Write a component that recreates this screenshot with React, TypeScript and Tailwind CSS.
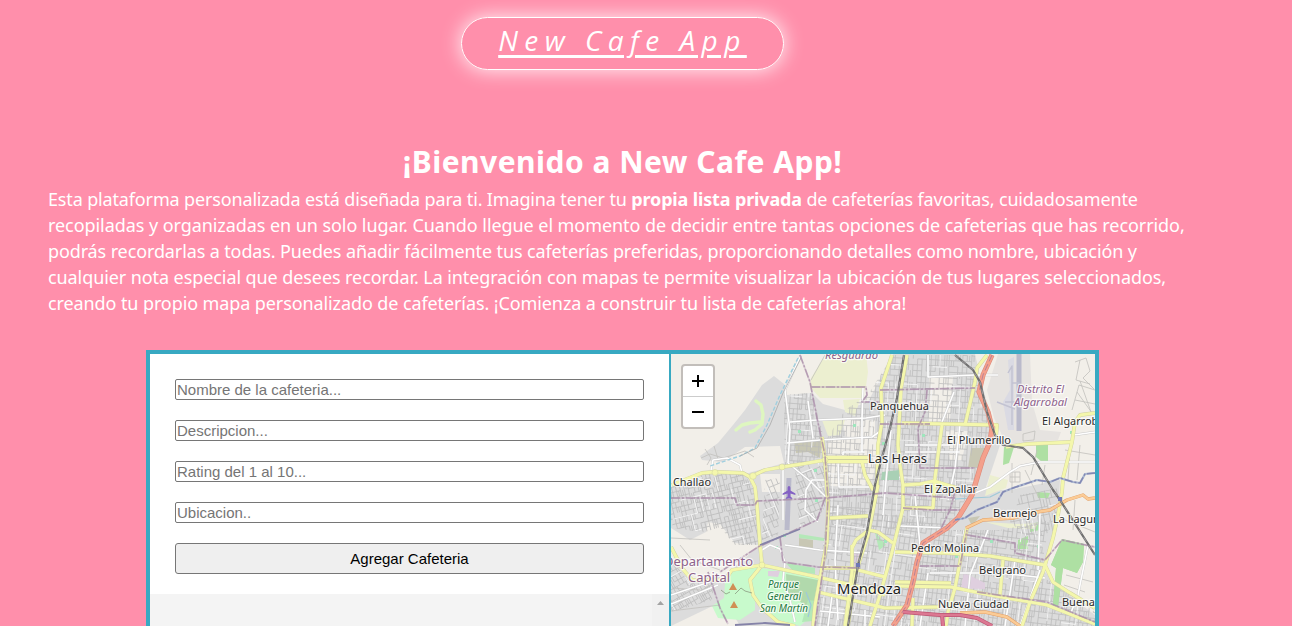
import React from "react";

type Zone = { id: string; shape: string; cx: number; cy: number; angle: number; step: number; size: number; seed: number };

function makeRandom(seed: number) {
  let s = seed;
  return () => {
    s = (s * 16807) % 2147483647;
    return s / 2147483647;
  };
}

function streetGrid(size: number, step: number, seed: number, density: number) {
  const rnd = makeRandom(seed);
  const n = Math.floor(size / step);
  let d = "";
  for (let i = -n; i <= n; i++) {
    for (let j = -n; j <= n; j++) {
      const x = i * step;
      const y = j * step * 1.3;
      if (rnd() < density) d += `M${x} ${y}h${step}`;
      if (rnd() < density) d += `M${x} ${y}v${step * 1.3}`;
      if (rnd() < density * 0.25) d += `M${x + step / 2} ${y}v${step * 1.3}`;
    }
  }
  return d;
}

const zones: Zone[] = [
  { id: "west", shape: "M671 487L705 474L743 474L756 490L760 545L735 545L720 527L705 532L671 528Z", cx: 710, cy: 510, angle: -14, step: 4, size: 80, seed: 11 },
  { id: "northwest", shape: "M784 395L812 393L822 430L825 460L785 465Z", cx: 800, cy: 430, angle: 4, step: 4, size: 60, seed: 31 },
  { id: "challao", shape: "M795 466L825 460L828 500L818 520L800 528L797 500ZM765 480L780 478L778 535L762 540Z", cx: 790, cy: 500, angle: -22, step: 5, size: 70, seed: 41 },
  { id: "north", shape: "M826 440L845 410L868 395L893 355L975 355L980 400L992 430L980 465L972 490L945 530L827 525Z", cx: 900, cy: 440, angle: 3, step: 4.5, size: 120, seed: 51 },
  { id: "center", shape: "M828 505L945 525L920 550L905 626L815 626L820 570Z", cx: 860, cy: 570, angle: 8, step: 5, size: 90, seed: 61 },
  { id: "southeast", shape: "M945 530L1000 530L1050 520L1040 575L1095 612V626H900L918 555Z", cx: 980, cy: 575, angle: 7, step: 4.5, size: 120, seed: 71 },
  { id: "bermejo", shape: "M1020 495L1060 488L1055 530L1030 540L1010 522Z", cx: 1030, cy: 510, angle: -12, step: 6, size: 50, seed: 81 },
  { id: "capital", shape: "M671 560L690 582L715 580L712 600L671 612Z", cx: 690, cy: 585, angle: -30, step: 4, size: 40, seed: 91 },
];

const yellowRoads = [
  "M672 485L702 473L715 472L743 473L750 477L765 470L782 467L802 464L825 460",
  "M825 457.5H868M825 461.5H868",
  "M750 477L755 487L757 505L760 545L762 565L750 580L753 595L762 608L778 622L795 626",
  "M671 547L682 568L692 580L725 580L732 570L762 565L818 577L865 588L885 595",
  "M822 437L825 460L827 490L828 505L827 542L822 568L815 605L813 626",
  "M892 355L881 388L882 422L878 445L877 485",
  "M862 462L865 475L873 490",
  "M907 355L901 388L898 445L900 465L903 485L903 508L897 532L892 552L880 595L870 626",
  "M987 355L977 368L975 382L965 425",
  "M902 423L997 425L996 437",
  "M942 425L935 478L933 508L903 508",
  "M903 485L920 484L934 481L957 488",
  "M1006 447L1027 444L1072 442",
  "M1095 413L1080 415L1075 422L1072 442L1063 478L1062 492L1058 515L1053 538L1043 572L1030 602L1022 626",
  "M895 552L947 553L990 556L1045 565L1053 582L1070 593L1095 608",
  "M1003 560L1000 595",
  "M895 582L951 583M895 586L951 587L990 595L1047 605L1095 624",
  "M967 528L960 562L955 588L948 612L946 626",
  "M830 518L868 516",
  "M818 592L885 608L940 607",
  "M878 485L868 535L855 575L848 626",
  "M852 545V572L845 626",
  "M820 568H850L885 577",
  "M913 598L912 626",
  "M852 548L856 540L869 530L878 532L893 543",
];

const whiteRoads = [
  "M801 355L785 390L790 430L788 463",
  "M790 422L817 420L866 418L885 415",
  "M808 401L813 438",
  "M787 443L820 440L872 437L879 432",
  "M863 388L862 418V452",
  "M843 455V452H865",
  "M928 355V377L975 375H998",
  "M954 392L942 422",
  "M960 425L955 468L948 500",
  "M711 470L713 460L727 458L740 465L742 473",
  "M788 463L810 481L827 498",
  "M812 480H826M812 480L806 490L805 510L818 522",
  "M783 470L783 520",
  "M762 560L762 550L770 545L780 549L785 562L783 580L790 600L795 622",
  "M785 545L820 550L867 553",
  "M838 462L839 487H878",
  "M838 505L835 560L838 620",
  "M891 430L887 470L883 515",
  "M915 495L920 545L917 570",
  "M905 445H950M905 452H960M900 495L935 495M900 526L950 528",
  "M975 493L990 487L1010 472L1020 466L1040 462H1095",
  "M1040 513L1038 570M1074 435L1095 432",
  "M930 573H1000L1045 578M928 573L920 626",
  "M988 530L970 575L965 626M1015 560L1005 626M1040 570L1020 626",
  "M1088 545L1078 595L1070 615",
  "M671 595L730 575M671 604L718 585M865 610L865 626M832 596L828 626M820 611L880 617",
];

const boundaries = [
  "M800 355L810 382L817 418L825 455L828 500L825 555L815 626",
  "M811 387H866L867 395L862 402H880",
  "M880 390L975 388",
  "M927 390L925 412L918 428L920 468H975",
  "M880 424H930",
  "M671 498H735L737 505H755L757 501L825 498L885 493L955 498",
  "M825 498L817 520L780 537L758 547L720 572",
  "M708 572L720 608L728 624",
  "M780 537L783 562L818 567L860 568",
  "M967 535L1015 543V553L1045 560L1062 540L1095 547",
  "M920 566H960L967 530",
  "M977 592L1047 602L1095 622",
  "M903 508L932 510H960M955 492L950 510L938 535",
];

const labels = [
  { t: "Resguardo", x: 825, y: 359, w: 53, s: 10.7, c: "#8d618b", i: true },
  { t: "Panquehua", x: 870, y: 410, w: 59, s: 10.7, c: "#2b2b2b" },
  { t: "Distrito El", x: 1017, y: 393, w: 47, s: 10.7, c: "#8d618b", i: true },
  { t: "Algarrobal", x: 1014, y: 406, w: 53, s: 10.7, c: "#8d618b", i: true },
  { t: "El Algarrobal", x: 1042, y: 425, w: 65, s: 10.7, c: "#2b2b2b" },
  { t: "El Plumerillo", x: 947, y: 444, w: 64, s: 10.7, c: "#2b2b2b" },
  { t: "Las Heras", x: 868, y: 463, w: 59, s: 12.6, c: "#2b2b2b" },
  { t: "Challao", x: 673, y: 486, w: 38, s: 10.7, c: "#2b2b2b" },
  { t: "El Zapallar", x: 924, y: 493, w: 53, s: 10.7, c: "#2b2b2b" },
  { t: "Bermejo", x: 993, y: 517, w: 44, s: 10.7, c: "#2b2b2b" },
  { t: "La Laguna", x: 1053, y: 523, w: 53, s: 10.7, c: "#2b2b2b" },
  { t: "Pedro Molina", x: 911, y: 552, w: 68, s: 10.7, c: "#2b2b2b" },
  { t: "Belgrano", x: 979, y: 574, w: 47, s: 10.7, c: "#2b2b2b" },
  { t: "Mendoza", x: 837, y: 594, w: 64, s: 14.8, c: "#1c1c1c" },
  { t: "Nueva Ciudad", x: 938, y: 608, w: 71, s: 10.7, c: "#2b2b2b" },
  { t: "Buena", x: 1062, y: 606, w: 33, s: 10.7, c: "#2b2b2b" },
  { t: "Departamento", x: 664, y: 566, w: 89, s: 12.8, c: "#8d618b" },
  { t: "Capital", x: 688, y: 582, w: 42, s: 12.8, c: "#8d618b" },
  { t: "Parque", x: 768, y: 588, w: 31, s: 10.2, c: "#1f7a3f", i: true },
  { t: "General", x: 767, y: 600, w: 34, s: 10.2, c: "#1f7a3f", i: true },
  { t: "San Martín", x: 760, y: 612, w: 48, s: 10.2, c: "#1f7a3f", i: true },
];

const greens = [
  [798, 430], [853, 424], [814, 469], [922, 434], [882, 442], [965, 545], [1070, 431], [913, 568],
  [955, 555], [815, 499], [775, 546], [846, 600], [1037, 545], [990, 540], [884, 540], [783, 534],
];

function CityMap() {
  const trunk = "M992 355L983 375L979 392L988 412L992 428L990 442L983 458L975 485L972 495L958 518L947 528L923 543L917 562L913 582L907 605L893 626";
  const rails = "M904 355L897 398L890 428L880 465L875 485L867 532L858 565L848 626M955 355L973 370L980 382L987 412L995 435L1003 445L1023 448L1033 457L1053 490L1060 500L1095 555";
  const river = "M1095 473L1085 474L1080 483L1073 482L1060 478L1050 482L1037 480L1013 488L1003 492L997 502L977 510L965 518L955 520";
  return (
    <svg className="block h-[272px] w-[424px]" viewBox="671 354 424 272" fill="none" strokeLinejoin="round">
      <defs>
        {zones.map((z) => (
          <clipPath key={z.id} id={z.id}>
            <path d={z.shape} />
          </clipPath>
        ))}
      </defs>
      <path fill="#f2efe9" d="M671 354H1095V626H671Z" />
      <path fill="#dcdcdc" d="M774 376L784 384L787 395L812 393L823 404L845 410L868 402L893 354H975L982 385L992 420L1000 445L985 490L1010 490L1060 480L1058 515L1050 545L1045 572L1075 600L1095 615V626H740L725 600L671 626V560L690 580L725 575L760 545L735 543L720 524L708 522L706 532L690 540L671 528V487L702 473L745 474L784 463L780 446L745 447L723 462L702 460L700 456L718 443L733 425L745 410L762 385Z" />
      <path fill="#f2efe9" d="M827 440L845 437L877 437V460L870 488L830 486ZM929 378L953 377L950 420L929 422ZM843 420H875V437H845ZM945 430L968 431L962 460H950ZM760 474H780L780 492H762Z" />
      <path fill="#ecefd0" d="M826 354H866L868 372L866 386L862 398L820 398L810 387L811 378ZM843 400L860 399L855 416L845 412Z" />
      <path fill="#ecefd0" d="M822 420H845L840 435L828 436ZM990 475L1008 480L1006 488L985 496Z" />
      <path fill="#e6e3e0" d="M998 354H1030L1032 402L1040 430L1061 432L1058 440L1006 444L994 418L987 390Z" />
      <path fill="#dadae3" d="M1008 360L1014 357V430H1008L1003 402L1010 390Z" />
      <path stroke="#babacb" strokeWidth="5" d="M1019 354V431M789 478L787 530" />
      <path stroke="#c3c3d2" strokeWidth="1.5" d="M1008 373L1012 366V425M1005 402H1019M997 402L1015 409M1012 383H1019" />
      <path fill="#c8c7b4" d="M794 441H822L820 458L808 452L796 453ZM971 448H990L980 467L968 468ZM799 538L813 540V548H799ZM968 518L980 516L972 526Z" />
      <path stroke="#def6c0" strokeWidth="3.4" strokeLinecap="round" strokeLinejoin="round" d="M756 401L761 405L763 414L762 424L755 430L750 432M760 422L750 423L742 425L736 430" />
      <path fill="#c8facc" d="M729 572L750 566L760 567L755 585L755 610L740 620L718 618L712 606L724 598L725 583ZM762 568L820 578L816 612L800 626L778 620L756 602L753 582Z" />
      <path fill="#a9cea1" d="M786 574L818 580L812 612L794 596L787 600Z" opacity=".75" />
      <path fill="#b4e8b8" d="M786 563L815 568V574L793 571ZM799 534L824 538V541L799 538ZM808 600L816 601L813 621L802 622ZM875 532L886 545L879 550Z" />
      <path fill="#aee0a3" d="M1062 539L1084 544L1083 562L1077 573L1063 568L1058 606L1053 605L1056 568L1051 565Z" />
      <path fill="#aee0a3" d="M1004 447H1014L1009 463L1003 465ZM1044 444H1048V462H1042L1036 457V445ZM1018 540L1028 536V549H1018ZM1030 524L1040 522V530L1030 532ZM1037 492L1050 493L1048 498H1038Z" />
      <path fill="#ecefd0" d="M985 522L1020 524L1038 523L1035 529L1008 528Z" />
      <path fill="#dfcfdf" d="M964 573L985 583V589L961 588ZM768 571H780L778 577L768 576ZM853 552L862 553L859 568H852Z" />
      {zones.map((z) => (
        <g key={z.id} clipPath={`url(#${z.id})`}>
          <g transform={`translate(${z.cx} ${z.cy}) rotate(${z.angle})`}>
            <path stroke="#bcbcbc" strokeWidth=".75" d={streetGrid(z.size, z.step, z.seed, 0.8)} />
            <path stroke="#f4f4f4" strokeWidth=".9" d={streetGrid(z.size, z.step * 3.2, z.seed + 5, 0.3)} />
          </g>
        </g>
      ))}
      <path fill="#a9d0b5" d="M882 472L899 470V480H881Z" />
      <path fill="#dfcfdf" d="M964 573L985 583V589L961 588Z" />
      <path fill="#c8c7b4" d="M973 448H989L980 467L969 467Z" />
      <path fill="#aee0a3" d="M1062 539L1084 544L1083 562L1077 573L1063 568L1058 606L1053 605L1056 568L1051 565Z" />
      <g stroke="#c2c0bd" strokeWidth=".8">
        <path d="M701 458L710 454L723 458L733 455L745 451L754 457M705 449L711 458L707 465M714 446L718 459M825 355L811 380M671 538L710 540M680 545L692 560L720 570M671 562L690 575M672 588L700 590M671 611L720 605" />
        <path d="M1075 362L1086 358L1090 371L1083 378L1094 389M1072 410L1079 385L1095 390M1075 400L1095 404M1077 392L1092 413M1080 381L1091 412M1080 360L1076 380L1090 384M1037 450L1031 475M1025 470L1040 500M1065 450L1095 455M1065 520L1095 532M1070 450L1068 480M1080 445L1077 480M1012 463V493M1045 465L1042 485M1066 575L1093 582M1064 585L1085 592M1075 500L1073 530M1010 472H1020V482H1010ZM1015 472V482M1010 477H1020M1023 434L1035 431L1034 440L1023 441Z" />
      </g>
      {greens.map(([x, y]) => (
        <path key={`${x}-${y}`} fill="#9fe6bd" d={`M${x} ${y}h3v3h-3z`} />
      ))}
      <g stroke="#c9c9c9" strokeWidth="2.3">{whiteRoads.map((d) => <path key={d} d={d} />)}</g>
      <g stroke="#ffffff" strokeWidth="1.6">{whiteRoads.map((d) => <path key={d} d={d} />)}</g>
      <path stroke="#9fcfdf" strokeWidth="1.4" strokeDasharray="4 2" d="M798 358L780 395L767 425L755 448L740 456L710 466" />
      <path stroke="#aaa" strokeWidth=".8" d="M801 358L783 393L770 425L757 448L740 456" />
      <path stroke="#9fc9d8" strokeWidth="1.2" d="M955 499L990 497L1000 492M806 592L811 605L808 617" />
      <g stroke="#cfd0a0" strokeWidth="3.8">{yellowRoads.map((d) => <path key={d} d={d} />)}</g>
      <g stroke="#f4f7ac" strokeWidth="3">{yellowRoads.map((d) => <path key={d} d={d} />)}</g>
      <g fill="#f4f7ac" stroke="#cfd0a0" strokeWidth=".5">
        <circle cx="715" cy="472.5" r="3" />
        <circle cx="753" cy="476" r="3.3" />
        <circle cx="782" cy="467" r="3" />
        <circle cx="825" cy="460" r="3" />
        <circle cx="762" cy="565" r="3" />
      </g>
      <g stroke="#b79bb6" strokeWidth="1.8" opacity=".4">{boundaries.map((d) => <path key={d} d={d} />)}</g>
      <g stroke="#a384a2" strokeWidth="1.5" strokeDasharray="9 2 2 2" opacity=".65">{boundaries.map((d) => <path key={d} d={d} />)}</g>
      <path stroke="#e0a06a" strokeWidth="3.4" d="M966 528L983 520L1013 518L1037 512L1050 510L1067 500L1083 495L1088 499L1095 498M960 613L985 612L1007 617L1020 626" />
      <path stroke="#fbcb95" strokeWidth="2.4" d="M966 528L983 520L1013 518L1037 512L1050 510L1067 500L1083 495L1088 499L1095 498M960 613L985 612L1007 617L1020 626" />
      <path stroke="#dd8a7a" strokeWidth="5.2" d={trunk} />
      <path stroke="#f4a08c" strokeWidth="4" d={trunk} />
      <path stroke="#b98196" strokeWidth="1" strokeDasharray="7 3" d="M992 355L983 375L979 392M958 518L947 528L923 543L917 562L913 582L907 605L893 626" />
      <path stroke="#bd5673" strokeWidth="4" d="M903 612L940 615H960L977 618L992 626M942 615L943 626" />
      <path stroke="#dc7892" strokeWidth="2.6" d="M903 612L940 615H960L977 618L992 626M942 615L943 626" />
      <path stroke="#a9b6d0" strokeWidth="2.2" d={river} />
      <path stroke="#8388b3" strokeWidth="1.5" strokeDasharray="8 2 2 2" d={river} />
      <path stroke="#8583a8" strokeWidth="1.8" d="M735 625L765 623L790 625M760 545L785 535L800 529" />
      <path stroke="#6f6f6f" strokeWidth="2.2" d={rails} />
      <path stroke="#b5b0b4" strokeWidth=".7" strokeDasharray="5 4" d={rails} />
      <path fill="#6f78b5" d="M856 563h4v4h-4zM1058 497h4v4h-4z" />
      <path fill="#8461c4" d="M789 486c1 0 1.4 1 1.4 2v2.4l5 3v1.6l-5-1.4v3l1.8 1.4v1l-3.2-.8-3.2.8v-1l1.8-1.4v-3l-5 1.4v-1.6l5-3V488c0-1 .4-2 1.4-2z" />
      <path fill="#d08f55" d="M733 583L737 590H729ZM734 601L738 608H730Z" />
      <path stroke="#8a9b80" strokeWidth=".8" d="M721 590L726 594L730 592M735 594L741 588L745 591L752 593" />
      <g style={{ paintOrder: "stroke" }} stroke="#ffffff" strokeOpacity=".72" strokeWidth="2.4" fontFamily="'Noto Sans', sans-serif">
        {labels.map((l) => (
          <text key={l.t} x={l.x} y={l.y} fontSize={l.s} fill={l.c} textLength={l.w} lengthAdjust="spacingAndGlyphs" fontStyle={l.i ? "italic" : "normal"}>
            {l.t}
          </text>
        ))}
      </g>
    </svg>
  );
}

const field = "block h-[21px] w-full shrink-0 rounded-[2px] border border-[#767676] bg-white px-[1px] text-[15px] leading-[17px] placeholder:text-[#757575] outline-none";

export default function App() {
  return (
    <div className="h-[626px] w-full overflow-hidden bg-[#ff8fab] font-['Liberation_Sans',sans-serif]">
      <div className="flex w-[1245px] flex-col items-center pt-[17px] text-white">
        <header className="flex h-[53px] w-[323px] justify-center rounded-[30px] border border-white shadow-[0_0_20px_rgba(255,255,255,0.9)]">
          <h1 className="pt-[2px] font-['Open_Sans',sans-serif] text-[28px] leading-[41px] font-normal tracking-[6.45px] whitespace-pre italic underline decoration-[3px] underline-offset-[4px]">New Cafe App</h1>
        </header>
        <h2 className="mt-[70px] h-[46px] font-['Noto_Sans',sans-serif] text-[30px] leading-[44px] font-bold tracking-[0.48px] whitespace-nowrap">¡Bienvenido a New Cafe App!</h2>
        <p className="w-full pl-12 font-['Noto_Sans',sans-serif] text-[18px] leading-[26px] whitespace-nowrap">
          <span className="block tracking-[-0.15px]">Esta plataforma personalizada está diseñada para ti. Imagina tener tu <b>propia lista privada</b> de cafeterías favoritas, cuidadosamente</span>
          <span className="block tracking-[-0.065px]">recopiladas y organizadas en un solo lugar. Cuando llegue el momento de decidir entre tantas opciones de cafeterias que has recorrido,</span>
          <span className="block tracking-[-0.12px]">podrás recordarlas a todas. Puedes añadir fácilmente tus cafeterías preferidas, proporcionando detalles como nombre, ubicación y</span>
          <span className="block tracking-[-0.085px]">cualquier nota especial que desees recordar. La integración con mapas te permite visualizar la ubicación de tus lugares seleccionados,</span>
          <span className="block tracking-[-0.1px]">creando tu propio mapa personalizado de cafeterías. ¡Comienza a construir tu lista de cafeterías ahora!</span>
        </p>
      </div>
      <main className="mt-[34px] ml-[146px] flex h-[400px] w-[953px] border-4 border-[#38a9c2] bg-white">
        <section className="w-[519px] shrink-0">
          <form className="flex h-[240px] flex-col gap-5 px-[25px] pt-[25px]">
            <input className={field} placeholder="Nombre de la cafeteria..." />
            <input className={field} placeholder="Descripcion..." />
            <input className={field} placeholder="Rating del 1 al 10..." />
            <input className={field} placeholder="Ubicacion.." />
            <button type="button" className="h-[31px] shrink-0 rounded-[3px] border border-[#767676] bg-[#efefef] text-[15px] leading-none text-black">Agregar Cafeteria</button>
          </form>
          <div className="flex h-[152px] justify-end bg-[#f4f4f4]">
            <div className="flex w-[17px] justify-center bg-[#f1f1f1] pt-[7px]">
              <svg className="h-1 w-[7px]" viewBox="0 0 7 4"><path fill="#a3a3a3" d="M3.5 0L7 4H0Z" /></svg>
            </div>
          </div>
        </section>
        <section className="relative w-[426px] shrink-0 overflow-hidden border-l-2 border-[#38a9c2] bg-[#f2efe9]">
          <CityMap />
          <div className="absolute top-[10px] left-[10px] flex h-[65px] w-[34px] flex-col overflow-hidden rounded-[4px] border-2 border-[#c2beba] bg-white">
            <div className="flex h-[31px] items-center justify-center border-b border-[#ccc]">
              <svg className="h-3 w-3" viewBox="0 0 12 12"><path stroke="#000" strokeWidth="2" d="M0 6H12M6 0V12" /></svg>
            </div>
            <div className="flex h-[30px] items-center justify-center">
              <svg className="h-3 w-3" viewBox="0 0 12 12"><path stroke="#000" strokeWidth="2" d="M0 6H12" /></svg>
            </div>
          </div>
        </section>
      </main>
    </div>
  );
}
